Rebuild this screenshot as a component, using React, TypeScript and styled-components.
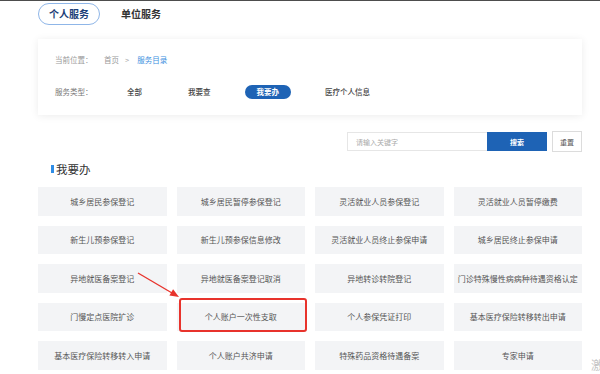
import styled, { createGlobalStyle } from "styled-components";

const GlobalStyle = createGlobalStyle`
  html, body {
    margin: 0;
    padding: 0;
    background: #fff;
    overflow: hidden;
  }
  body {
    font-family: "Noto Sans CJK SC", "Noto Sans", sans-serif;
  }
`;

const Page = styled.div`
  position: relative;
  width: 600px;
  height: 374px;
  border-top: 1px solid #4d4d4d;
  box-sizing: border-box;
  overflow: hidden;
`;

const Wrap = styled.div`
  width: 544px;
  margin-left: 38px;
`;

const Tabs = styled.div`
  display: flex;
  align-items: center;
  gap: 21px;
  height: 21px;
  margin-top: 2px;
`;

const Tab = styled.div<{ active?: boolean }>`
  height: 20px;
  padding: 0 ${(p) => (p.active ? "10px" : "0")};
  border: ${(p) => (p.active ? "1px solid #8fb6e8" : "none")};
  border-radius: 11px;
  display: flex;
  align-items: center;
  font-size: 10px;
  font-weight: 700;
  color: ${(p) => (p.active ? "#1c3f78" : "#333")};
  line-height: 1;
`;

const Panel = styled.div`
  margin-top: 15px;
  height: 76px;
  background: #fff;
  box-shadow: 0 1px 8px rgba(0, 0, 0, 0.08);
  padding: 0 17px;
  box-sizing: border-box;
  display: flex;
  flex-direction: column;
`;

const Crumbs = styled.div`
  display: flex;
  align-items: center;
  height: 14px;
  margin-top: 13px;
  font-size: 7.5px;
  color: #999;
`;

const CrumbLabel = styled.span`
  width: 49px;
`;

const Sep = styled.span`
  margin: 0 8px 0 6px;
  color: #aaa;
`;

const CrumbActive = styled.span`
  color: #3d8fe0;
`;

const Types = styled.div`
  display: flex;
  align-items: center;
  margin-top: 18px;
  height: 15px;
  gap: 22px;
`;

const TypeLabel = styled.span`
  font-size: 7.5px;
  color: #777;
  width: 38px;
`;

const TypeItem = styled.span<{ active?: boolean }>`
  height: 14px;
  padding: 0 12px;
  border-radius: 8px;
  display: flex;
  align-items: center;
  font-size: 7.5px;
  font-weight: ${(p) => (p.active ? 700 : 500)};
  color: ${(p) => (p.active ? "#fff" : "#444")};
  background: ${(p) => (p.active ? "#1e63b5" : "transparent")};
`;

const SearchRow = styled.div`
  display: flex;
  justify-content: flex-end;
  align-items: center;
  margin-top: 16px;
  height: 21px;
`;

const Input = styled.div`
  width: 140px;
  height: 19px;
  border: 1px solid #e6e6e6;
  border-right: none;
  box-sizing: border-box;
  display: flex;
  align-items: center;
  padding-left: 8px;
  font-size: 7px;
  color: #aaa;
`;

const SearchBtn = styled.div`
  width: 60px;
  height: 19px;
  background: #1e63b5;
  color: #fff;
  font-size: 7px;
  font-weight: 700;
  display: flex;
  align-items: center;
  justify-content: center;
`;

const ResetBtn = styled.div`
  width: 30px;
  height: 21px;
  margin-left: 5px;
  border: 1px solid #dcdcdc;
  box-sizing: border-box;
  font-size: 7px;
  color: #555;
  display: flex;
  align-items: center;
  justify-content: center;
`;

const Heading = styled.div`
  display: flex;
  align-items: center;
  margin: 10px 0 0 13px;
  height: 14px;
  font-size: 11.5px;
  color: #333;
`;

const Bar = styled.span`
  flex: none;
  width: 3px;
  height: 8px;
  background: #2f8de6;
  margin-right: 2px;
`;

const Grid = styled.div`
  display: grid;
  grid-template-columns: repeat(4, 1fr);
  grid-auto-rows: 28.5px;
  column-gap: 10px;
  row-gap: 10px;
  margin-top: 11px;
`;

const Cell = styled.div<{ marked?: boolean }>`
  position: relative;
  background: #f3f4f6;
  display: flex;
  align-items: center;
  justify-content: center;
  font-size: 8px;
  color: #555;
  white-space: nowrap;

  &::after {
    content: "";
    display: ${(p) => (p.marked ? "block" : "none")};
    position: absolute;
    top: -5px;
    left: 2px;
    right: -2px;
    bottom: -1px;
    border: 2px solid #e8332c;
    border-radius: 3px;
  }
`;

const Overlay = styled.svg`
  position: absolute;
  left: 0;
  top: -1px;
  pointer-events: none;
`;

const Watermark = styled.span`
  position: absolute;
  left: 591px;
  top: 355px;
  font-size: 12px;
  color: #c4c4c4;
  white-space: nowrap;
`;

const items = [
  "城乡居民参保登记",
  "城乡居民暂停参保登记",
  "灵活就业人员参保登记",
  "灵活就业人员暂停缴费",
  "新生儿预参保登记",
  "新生儿预参保信息修改",
  "灵活就业人员终止参保申请",
  "城乡居民终止参保申请",
  "异地就医备案登记",
  "异地就医备案登记取消",
  "异地转诊转院登记",
  "门诊特殊慢性病病种待遇资格认定",
  "门慢定点医院扩诊",
  "个人账户一次性支取",
  "个人参保凭证打印",
  "基本医疗保险转移转出申请",
  "基本医疗保险转移转入申请",
  "个人账户共济申请",
  "特殊药品资格待遇备案",
  "专家申请",
];

const App = () => {
  return (
    <>
      <GlobalStyle />
      <Page>
        <Wrap>
          <Tabs>
            <Tab active>个人服务</Tab>
            <Tab>单位服务</Tab>
          </Tabs>

          <Panel>
            <Crumbs>
              <CrumbLabel>当前位置：</CrumbLabel>
              <span>首页</span>
              <Sep>&gt;</Sep>
              <CrumbActive>服务目录</CrumbActive>
            </Crumbs>
            <Types>
              <TypeLabel>服务类型：</TypeLabel>
              <TypeItem>全部</TypeItem>
              <TypeItem>我要查</TypeItem>
              <TypeItem active>我要办</TypeItem>
              <TypeItem>医疗个人信息</TypeItem>
            </Types>
          </Panel>

          <SearchRow>
            <Input>请输入关键字</Input>
            <SearchBtn>搜索</SearchBtn>
            <ResetBtn>重置</ResetBtn>
          </SearchRow>

          <Heading>
            <Bar />
            我要办
          </Heading>

          <Grid>
            {items.map((name) => (
              <Cell key={name} marked={name === "个人账户一次性支取"}>
                {name}
              </Cell>
            ))}
          </Grid>
        </Wrap>

        <Overlay width="600" height="374" viewBox="0 0 600 374">
          <line x1="138" y1="273" x2="172" y2="293" stroke="#e8332c" strokeWidth="1.4" />
          <polygon points="179,297 169.4,295.6 173.1,289.3" fill="#e8332c" />
        </Overlay>
        <Watermark>激活</Watermark>
      </Page>
    </>
  );
};

export default App;
